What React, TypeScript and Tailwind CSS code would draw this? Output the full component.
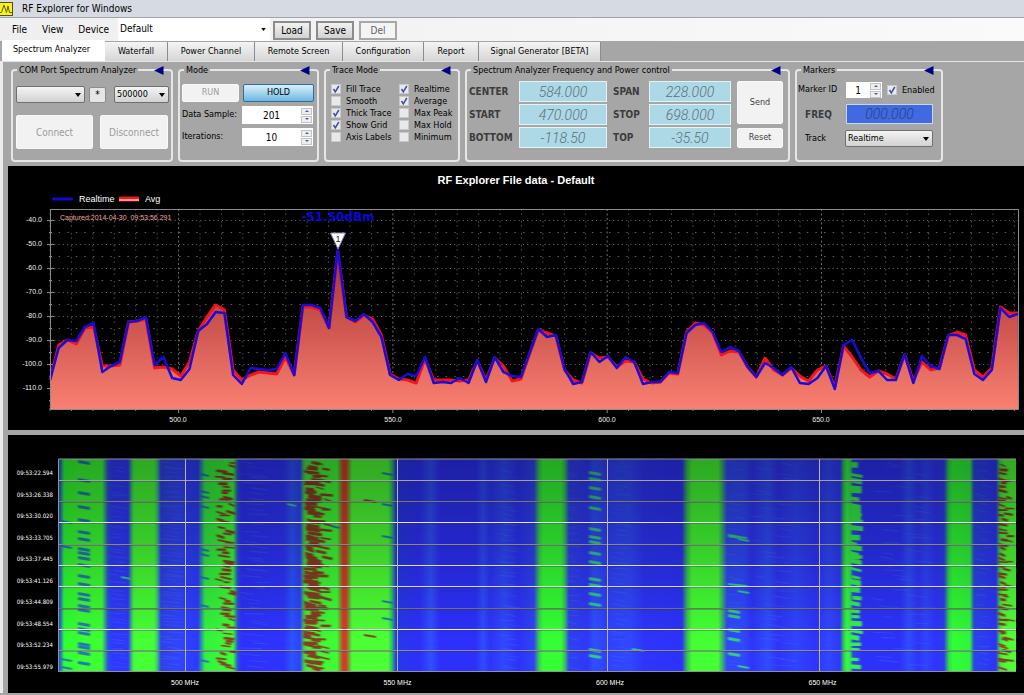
import type { ReactNode } from 'react';
import { clsx } from 'clsx';

const menus = ['File', 'View', 'Device'];

const tabs = [
  { label: 'Waterfall', width: 'w-[63px]' },
  { label: 'Power Channel', width: 'w-[87px]' },
  { label: 'Remote Screen', width: 'w-[88px]' },
  { label: 'Configuration', width: 'w-[81px]' },
  { label: 'Report', width: 'w-[55px]' },
  { label: 'Signal Generator [BETA]', width: 'w-[122px]' },
];

const traceOptions = [
  { label: 'Fill Trace', on: true },
  { label: 'Smooth', on: false },
  { label: 'Thick Trace', on: true },
  { label: 'Show Grid', on: true },
  { label: 'Axis Labels', on: false },
];

const traceModes = [
  { label: 'Realtime', on: true },
  { label: 'Average', on: true },
  { label: 'Max Peak', on: false },
  { label: 'Max Hold', on: false },
  { label: 'Minimum', on: false },
];

// Trace heights, one sample every TRACE_STEP units from the left axis
const TRACE_STEP = 8.72;

const realtime = [
  380, 348, 340, 341, 327, 323, 372, 366, 362, 322,
  321, 317, 365, 357, 378, 380, 369, 331, 324, 312,
  313, 375, 384, 368, 369, 370, 369, 353, 375, 305,
  305, 308, 328, 250, 317, 321, 314, 322, 337, 375,
  380, 374, 376, 357, 383, 382, 383, 378, 383, 360,
  382, 357, 372, 376, 377, 353, 329, 337, 335, 369,
  384, 382, 352, 362, 356, 368, 357, 362, 384, 382,
  382, 372, 373, 333, 325, 323, 332, 352, 347, 351,
  367, 377, 363, 368, 375, 367, 383, 384, 378, 366,
  389, 345, 340, 358, 373, 371, 380, 380, 354, 383,
  356, 366, 369, 335, 335, 339, 374, 380, 370, 308,
  317, 314,
];

const average = [
  380, 345, 340, 344, 328, 327, 366, 366, 365, 322,
  321, 319, 368, 367, 369, 376, 362, 331, 317, 305,
  310, 370, 380, 375, 372, 373, 374, 357, 375, 307,
  307, 310, 328, 252, 317, 322, 315, 319, 335, 374,
  379, 380, 383, 359, 380, 380, 380, 381, 380, 361,
  380, 358, 366, 381, 379, 354, 330, 333, 336, 370,
  380, 383, 353, 358, 357, 367, 361, 362, 379, 383,
  382, 373, 374, 332, 323, 325, 333, 355, 351, 352,
  367, 377, 358, 370, 375, 368, 376, 381, 370, 366,
  387, 346, 357, 370, 377, 371, 374, 379, 355, 381,
  362, 370, 368, 336, 332, 335, 370, 377, 368, 307,
  313, 313,
];

const toPoints = (data: number[]) =>
  data.map((y, i) => `${(50 + i * TRACE_STEP).toFixed(1)},${y}`).join(' ');

const dbLabels = ['-40.0', '-50.0', '-60.0', '-70.0', '-80.0', '-90.0', '-100.0', '-110.0'];

const mhzLabels = [
  { x: 178, label: '500.0' },
  { x: 393, label: '550.0' },
  { x: 607, label: '600.0' },
  { x: 821, label: '650.0' },
];

const times = [
  '09:53:22.594',
  '09:53:26.338',
  '09:53:30.020',
  '09:53:33.705',
  '09:53:37.445',
  '09:53:41.126',
  '09:53:44.809',
  '09:53:48.554',
  '09:53:52.234',
  '09:53:55.979',
];

// Signal level colours across the waterfall
const bands: [number, string][] = [
  [58, '#2c34f0'], [61, '#2a7fb0'], [64, '#2cff34'], [78, '#3aff30'], [102, '#3cff34'],
  [108, '#2a50e0'], [112, '#3038ff'], [128, '#3038ff'], [133, '#40f040'], [135, '#46ff34'],
  [154, '#46ff34'], [157, '#3ad070'], [161, '#3040e8'], [178, '#3044ff'], [198, '#2c3cff'],
  [205, '#34f040'], [233, '#3cff34'], [238, '#2c48e0'], [242, '#2c30fa'], [284, '#2e34ff'],
  [292, '#2c54ff'], [300, '#2e40ff'], [304, '#40d050'], [307, '#44f034'], [337, '#3cff34'],
  [340, '#78a034'], [343, '#d43c28'], [346, '#d43c28'], [349, '#78a034'], [352, '#4cff34'],
  [388, '#4cff34'], [392, '#2cc060'], [396, '#2838e8'], [420, '#2c30fa'], [431, '#3050ff'],
  [440, '#2c30fa'], [476, '#2c30fa'], [483, '#304cff'], [490, '#2c34fa'], [504, '#3048ff'],
  [518, '#2c32fa'], [534, '#3044f4'], [539, '#38d050'], [543, '#34ff34'], [561, '#34ff34'],
  [565, '#38c060'], [569, '#3040f0'], [588, '#2e38fa'], [594, '#3050ff'], [606, '#3040ff'],
  [630, '#3048ff'], [644, '#2e34fa'], [682, '#2c32fa'], [687, '#38c050'], [692, '#44ff34'],
  [718, '#44ff34'], [722, '#3cb868'], [727, '#3048f8'], [744, '#3048ff'], [752, '#2e34fa'],
  [768, '#304cff'], [778, '#2e34fa'], [796, '#3044ff'], [816, '#2e34fa'], [829, '#3048ff'],
  [840, '#2e38fa'], [844, '#30d050'], [847, '#34ff3c'], [850, '#34e850'], [853, '#2e44f0'],
  [862, '#2c32fa'], [900, '#2c32fa'], [909, '#304cff'], [918, '#2e34fa'], [926, '#3044ff'],
  [936, '#2e34fa'], [944, '#2c3cf0'], [949, '#30e044'], [953, '#30ff34'], [970, '#30f43c'],
  [974, '#2c44e8'], [996, '#2c34fa'], [1000, '#40e044'], [1004, '#4cff34'], [1016, '#4cff34'],
];

const WF_LEFT = 58;
const WF_RIGHT = 1016;
const WF_TOP = 459;
const WF_BOTTOM = 672;

const gridX = [185, 397, 607, 819];
const gridY = [
  { y: 480, tone: '#a0a0b0' },
  { y: 501, tone: '#77777f' },
  { y: 522, tone: '#e4e4ee' },
  { y: 544, tone: '#88888c' },
  { y: 565, tone: '#dcdce4' },
  { y: 586, tone: '#d8d8e0' },
  { y: 608, tone: '#707070' },
  { y: 629, tone: '#f0f0f6' },
  { y: 650, tone: '#8c8c90' },
];

type Speck = { x: number; y: number; w: number; h: number; skew: number };

function makeRandom(seed: number) {
  let s = seed;
  return () => {
    s = (s * 16807) % 2147483647;
    return s / 2147483647;
  };
}

function scatter(seed: number, left: number, right: number, count: number, width: number, height: number): Speck[] {
  const rand = makeRandom(seed);
  return Array.from({ length: count }, (_, i) => {
    const w = width * (0.6 + rand() * 0.6);
    return {
      x: left + rand() * Math.max(0, right - left - w),
      y: WF_TOP + 1 + ((i + rand() * 0.8) * (WF_BOTTOM - WF_TOP - 5)) / count,
      w,
      h: height * (0.7 + rand() * 0.7),
      skew: rand() * 3,
    };
  });
}

const at = (x: number, w: number, h: number, ys: number[]): Speck[] =>
  ys.map((y) => ({ x, y, w, h, skew: 2 }));

const streaks = [
  ...scatter(11, 108, 128, 44, 16, 1),
  ...scatter(23, 160, 184, 60, 18, 1),
  ...scatter(31, 240, 270, 40, 20, 1),
  ...scatter(47, 498, 520, 40, 14, 1),
  ...scatter(53, 566, 580, 30, 10, 1),
  ...scatter(59, 610, 630, 40, 14, 1),
  ...scatter(61, 722, 745, 30, 14, 1),
  ...scatter(67, 750, 800, 40, 18, 1),
  ...scatter(71, 868, 935, 44, 18, 1),
  ...scatter(73, 975, 992, 30, 10, 1),
];

const blueSpecks = [
  ...at(78, 12, 3, [460, 478, 491, 505, 518, 530, 537, 547, 551, 556, 563, 574, 582, 592, 597, 604, 608, 622, 627, 631, 642, 645, 651, 661]),
  ...at(61, 11, 2, [520, 545, 658, 666]),
  ...at(200, 9, 2, [473, 490, 495, 505, 548, 553, 576, 604, 659]),
  ...at(382, 11, 2, [472, 503, 535, 600, 617]),
  ...at(331, 9, 2, [525]),
];

const redSpecks = [
  ...scatter(83, 215, 237, 62, 10, 2),
  ...scatter(97, 303, 322, 74, 13, 3),
  ...scatter(101, 312, 333, 40, 11, 2),
  ...scatter(103, 997, 1008, 44, 9, 2),
  ...scatter(107, 1002, 1015, 16, 9, 2),
  ...at(364, 12, 2, [499, 634]),
];

const greenSpecks = [
  ...at(589, 12, 3, [471, 477, 486, 495, 506, 527, 535, 540, 551, 560, 577, 583, 592, 602, 648, 654]),
  ...at(728, 19, 2, [535, 583]),
  ...at(728, 12, 3, [534, 609, 614, 628, 637, 652]),
  ...at(738, 11, 2, [538, 590, 665]),
  ...at(632, 12, 2, [648]),
  ...at(121, 10, 2, [576]),
  ...at(287, 9, 2, [503]),
];

const edgeTeeth = [
  ...scatter(109, 848, 862, 30, 13, 4),
  ...at(850, 11, 9, [503, 512]),
  ...at(849, 10, 7, [551]),
];

function Specks({ items, fill, opacity }: { items: Speck[]; fill: string; opacity: number }) {
  return (
    <g fill={fill} opacity={opacity}>
      {items.map(({ x, y, w, h, skew }, i) => (
        <path key={i} d={`M${x} ${y}L${x + w} ${y + skew}V${y + skew + h}L${x} ${y + h}Z`} />
      ))}
    </g>
  );
}

function Group({ title, className, children }: { title: string; className: string; children: ReactNode }) {
  return (
    <fieldset className={clsx('relative h-[98px] shrink-0 rounded-[4px] border-2 border-[#e6e6e6]', className)}>
      <legend className="ml-1 px-[2px] text-[9px] leading-[12px] text-black">{title}</legend>
      <button type="button" aria-label={`Collapse ${title}`} className="absolute -top-[10px] right-[7px] h-[9px] w-[10px]">
        <svg viewBox="0 0 10 9" className="block h-[9px] w-[10px]">
          <path d="M0 4.500L9.500 0V9Z" fill="#00008b" />
        </svg>
      </button>
      {children}
    </fieldset>
  );
}

function Check({ label, on }: { label: string; on: boolean }) {
  return (
    <label className="flex items-center gap-[5px] text-[9px] leading-[12px] text-black">
      <span className="relative h-[10px] w-[10px] shrink-0">
        <input
          type="checkbox"
          defaultChecked={on}
          className="peer block h-[10px] w-[10px] appearance-none border border-[#c9c9c9] bg-[#e9e9ec]"
        />
        <svg viewBox="0 0 10 10" className="pointer-events-none absolute inset-0 hidden h-[10px] w-[10px] peer-checked:block">
          <path d="M2.500 5L4.300 7.800L7.800 2" fill="none" stroke="#3a4f9c" strokeWidth="1.500" />
        </svg>
      </span>
      {label}
    </label>
  );
}

function Picker({ id, label, value, className }: { id: string; label?: string; value: string; className: string }) {
  return (
    <span className={clsx('relative block', className)}>
      <select
        id={id}
        aria-label={label}
        defaultValue={value}
        className="block h-[17px] w-full appearance-none rounded-[2px] border border-[#707070] bg-linear-to-b from-[#f4f4f4] to-[#d2d2d2] px-[2px] text-[9px] leading-[15px] text-black"
      >
        <option>{value}</option>
      </select>
      <svg viewBox="0 0 6 4" className="pointer-events-none absolute top-[7px] right-[4px] h-[4px] w-[6px]">
        <path d="M0 0H6L3 4Z" fill="#000" />
      </svg>
    </span>
  );
}

function Spinner({ id, value, className }: { id: string; value: string; className: string }) {
  return (
    <span className={clsx('flex items-center bg-white pr-px', className)}>
      <input id={id} defaultValue={value} className="w-full min-w-0 flex-1 bg-transparent text-center text-[10px] leading-[15px] text-black" />
      <span className="flex w-[11px] shrink-0 flex-col gap-px">
        {['M1 3L3 1L5 3Z', 'M1 1L3 3L5 1Z'].map((d, i) => (
          <button
            key={d}
            type="button"
            aria-label={i === 0 ? 'Increase' : 'Decrease'}
            className="flex h-[7px] items-center justify-center border border-[#c4c4c8] bg-[#eeeef2]"
          >
            <svg viewBox="0 0 6 4" className="h-[4px] w-[6px]">
              <path d={d} fill="#4a5f9e" />
            </svg>
          </button>
        ))}
      </span>
    </span>
  );
}

function Lcd({ label, value }: { label: string; value: string }) {
  return (
    <>
      <label htmlFor={label} className="text-[10px] leading-[14px] font-bold text-[#3c3c3c]">
        {label}
      </label>
      <input
        id={label}
        defaultValue={value}
        className="h-[21px] w-full min-w-0 border border-[#e4f2f5] bg-[#add8e6] text-center font-['Roboto',sans-serif] text-[14px] leading-[19px] font-light text-[#58707a] italic"
      />
    </>
  );
}

function PlainButton({ children, className }: { children: ReactNode; className: string }) {
  return (
    <button type="button" className={clsx('rounded-[2px] border border-[#f8f8f8] bg-[#f2f2f2]', className)}>
      {children}
    </button>
  );
}

function SpectrumChart() {
  return (
    <svg viewBox="8 166 1016 264" className="block w-full bg-black" fontFamily="'Liberation Sans', Arial, sans-serif">
      <defs>
        <linearGradient id="fill" gradientUnits="userSpaceOnUse" x1="0" y1="240" x2="0" y2="409">
          <stop offset="0" stopColor="#8c3434" />
          <stop offset="0.4" stopColor="#c44c48" />
          <stop offset="1" stopColor="#fa8072" />
        </linearGradient>
      </defs>

      <text x="516" y="184" fontSize="11" fontWeight="700" fill="#fff" textAnchor="middle">
        RF Explorer File data - Default
      </text>

      {/* Legend */}
      <path d="M52 199H73" stroke="#0c0ccc" strokeWidth="3" />
      <text x="79" y="202" fontSize="9" fill="#fff">
        Realtime
      </text>
      <path d="M119 199H139" stroke="#f01818" strokeWidth="5" />
      <path d="M119 200H139" stroke="#fa9a90" strokeWidth="2" />
      <text x="145" y="202" fontSize="9" fill="#fff">
        Avg
      </text>

      {/* Grid */}
      {Array.from({ length: 16 }, (_, i) => {
        const y = 220 + i * 12;
        const major = i % 2 === 0;
        return (
          <g key={y} stroke="#8a8a8a">
            <path d={`M50 ${y + 0.5}H1018`} strokeDasharray={major ? '1 3.300' : '1.500 7.100'} opacity={major ? 0.8 : 0.7} />
            <path d={major ? `M47 ${y + 0.5}H54` : `M49 ${y + 0.5}H52`} />
          </g>
        );
      })}
      {Array.from({ length: 46 }, (_, i) => {
        const x = 50 + i * 21.43;
        const major = i % 10 === 6;
        return x < 1018 ? (
          <g key={i} stroke="#8a8a8a">
            <path
              d={`M${x} 209V409`}
              strokeDasharray={major ? '2 2.500' : '1.500 2.800 1.500 6.200'}
              opacity={major ? 0.8 : 0.6}
            />
            <path d={`M${x} 408V${major ? 413 : 411}`} />
          </g>
        ) : null;
      })}

      {/* Traces */}
      <polygon points={`50,409 ${toPoints(average)} 1018,409`} fill="url(#fill)" />
      <polyline points={toPoints(average)} fill="none" stroke="#f4141c" strokeWidth="3" strokeLinejoin="round" />
      <polyline points={toPoints(realtime)} fill="none" stroke="#1a0cd8" strokeWidth="2.500" strokeLinejoin="round" />
      <path d="M50.500 409.500V209.500H1018.500V409.500Z" fill="none" stroke="#8c8c8c" />

      {/* Peak marker */}
      <path d="M330.500 233H345.500L338 249Z" fill="#fff" stroke="#8a84c0" />
      <text x="338" y="242" fontSize="9" fill="#222" textAnchor="middle">
        1
      </text>
      <text x="338" y="221" fontSize="12" fontWeight="700" fill="#0808d8" textAnchor="middle" fontFamily="'DejaVu Sans', sans-serif">
        -51.50dBm
      </text>
      <text x="60" y="220" fontSize="7" fill="#f2a8a0">
        Captured:2014-04-30 {'\u00a0'}09:53:56.291
      </text>

      {/* Axis labels */}
      <g fill="#f0f0f0" fontSize="7">
        {dbLabels.map((label, i) => (
          <text key={label} x="42" y={222 + i * 24} textAnchor="end">
            {label}
          </text>
        ))}
        {mhzLabels.map(({ x, label }) => (
          <text key={label} x={x} y="422" textAnchor="middle">
            {label}
          </text>
        ))}
      </g>
    </svg>
  );
}

function WaterfallChart() {
  const width = WF_RIGHT - WF_LEFT;
  const height = WF_BOTTOM - WF_TOP;

  return (
    <svg viewBox="8 435 1016 258" className="block w-full bg-black" fontFamily="'Liberation Sans', Arial, sans-serif">
      <defs>
        <linearGradient id="bands">
          {bands.map(([x, color]) => (
            <stop key={x} offset={(x - WF_LEFT) / width} stopColor={color} />
          ))}
        </linearGradient>
        <linearGradient id="age" x1="0" y1="0" x2="0" y2="1">
          <stop offset="0" stopOpacity="0.340" />
          <stop offset="0.400" stopOpacity="0.200" />
          <stop offset="0.850" stopOpacity="0" />
        </linearGradient>
        <filter id="soft" x="-5%" y="-5%" width="110%" height="110%">
          <feGaussianBlur stdDeviation="0.9 0.5" />
        </filter>
        <clipPath id="area">
          <rect x={WF_LEFT} y={WF_TOP} width={width} height={height} />
        </clipPath>
      </defs>

      <rect x={WF_LEFT} y={WF_TOP} width={width} height={height} fill="url(#bands)" />
      <g clipPath="url(#area)">
        <g filter="url(#soft)">
          <Specks items={streaks} fill="#3c70f0" opacity={0.35} />
          <Specks items={edgeTeeth} fill="#34f048" opacity={1} />
          <Specks items={blueSpecks} fill="#2060d0" opacity={0.85} />
          <Specks items={greenSpecks} fill="#38e070" opacity={0.85} />
          <Specks items={redSpecks} fill="#8c3424" opacity={0.95} />
        </g>
      </g>
      <rect x={WF_LEFT} y={WF_TOP} width={width} height={height} fill="url(#age)" />

      {/* Grid */}
      {gridY.map(({ y, tone }) => (
        <g key={y}>
          <path d={`M${WF_LEFT} ${y + 1}H${WF_RIGHT}`} stroke="#303038" opacity="0.6" />
          <path d={`M${WF_LEFT} ${y}.500H${WF_RIGHT}`} stroke={tone} />
        </g>
      ))}
      {gridX.map((x) => (
        <path key={x} d={`M${x}.500 ${WF_TOP}V${WF_BOTTOM}`} stroke="#b4b4b4" />
      ))}
      <path d="M58.500 459H1016M58.500 671.500H1016M58.500 459V672" stroke="#909098" fill="none" />

      {/* Axis labels */}
      <g fill="#fff" fontSize="6" fontFamily="'DejaVu Sans Condensed', sans-serif">
        {times.map((time, i) => (
          <text key={time} x="53" y={475 + i * 21.5} textAnchor="end">
            {time}
          </text>
        ))}
      </g>
      <g fill="#fff" fontSize="7">
        {['500 MHz', '550 MHz', '600 MHz', '650 MHz'].map((label, i) => (
          <text key={label} x={185 + i * 212.5} y="685" textAnchor="middle">
            {label}
          </text>
        ))}
      </g>
    </svg>
  );
}

export default function App() {
  return (
    <div className="min-h-screen overflow-hidden bg-[#a6a6a6] font-['DejaVu_Sans_Condensed','Noto_Sans',sans-serif] text-[10px] text-black">
      {/* Title bar */}
      <header className="flex h-[18px] items-center gap-[9px] border-b border-[#a0a4aa] bg-[#d6dbe3]">
        <svg viewBox="0 0 13 14" className="h-[14px] w-[13px]">
          <rect x="-1" y="0.500" width="13.500" height="13" fill="#f8f020" stroke="#55501a" />
          <path d="M0 10.500H1.500L4 3L6.500 10.500L8 4L9.500 10.500H12" fill="none" stroke="#6a6010" />
        </svg>
        <h1 className="text-[10px] leading-[14px]">RF Explorer for Windows</h1>
      </header>

      {/* Menu bar */}
      <nav className="flex h-[23px] bg-linear-to-r from-[#efefef] to-[#fafafa]">
        <div className="flex w-[118px] items-center gap-[15px] pl-3">
          {menus.map((menu) => (
            <button key={menu} type="button" className="text-[10px]">
              {menu}
            </button>
          ))}
        </div>
        <span className="relative block w-[152px]">
          <select aria-label="Preset" className="h-[23px] w-full appearance-none bg-white px-[2px] pb-[2px] text-[10px]">
            <option>Default</option>
          </select>
          <svg viewBox="0 0 6 4" className="pointer-events-none absolute top-[10px] right-[4px] h-[3px] w-[5px]">
            <path d="M0 0H6L3 4Z" fill="#000" />
          </svg>
        </span>
        <div className="flex items-end gap-[5px] pb-px pl-[3px]">
          <button type="button" className="h-[19px] w-[38px] border-2 border-[#8c8c8c] bg-linear-to-b from-[#f2f2f2] to-[#d2d2d2] leading-[14px]">
            Load
          </button>
          <button type="button" className="h-[19px] w-[38px] border-2 border-[#8c8c8c] bg-linear-to-b from-[#f2f2f2] to-[#d2d2d2] leading-[14px]">
            Save
          </button>
          <button type="button" className="h-[19px] w-[38px] border-2 border-[#a8a8a8] bg-[#f4f4f4] leading-[14px] text-[#606060]">
            Del
          </button>
        </div>
      </nav>

      {/* Tabs */}
      <div role="tablist" className="flex h-[21px] items-end border-b border-[#e6e6e6] pl-[2px] text-[9px]">
        <button type="button" role="tab" aria-selected="true" className="h-[21px] w-[103px] bg-white pr-1 pb-[2px]">
          Spectrum Analyzer
        </button>
        {tabs.map(({ label, width }) => (
          <button
            key={label}
            type="button"
            role="tab"
            aria-selected="false"
            className={clsx(
              'h-[19px] border-r border-[#8c8c8c] bg-linear-to-b from-[#f4f4f4] to-[#d6d6d6] whitespace-nowrap',
              width,
            )}
          >
            {label}
          </button>
        ))}
      </div>

      <main className="border-l-3 border-[#ececec]">
        <div className="flex gap-[5px] pt-[2px] pb-[4px] pl-[8px]">
          <Group title="COM Port Spectrum Analyzer" className="w-[162px]">
            <div className="flex items-center pt-[10px] pl-[3px]">
              <Picker id="port" label="COM port" value="" className="w-[69px]" />
              <button type="button" className="ml-1 h-[16px] w-[17px] rounded-[2px] border border-[#8c8c8c] bg-[#e6e6e6] leading-[14px]">
                *
              </button>
              <Picker id="baud" label="Baud rate" value="500000" className="ml-[8px] w-[55px]" />
            </div>
            <div className="flex gap-[7px] pt-[12px] pl-[3px] text-[10px] text-[#9c9c9c]">
              <PlainButton className="h-[34px] w-[77px]">Connect</PlainButton>
              <PlainButton className="h-[34px] w-[68px]">Disconnect</PlainButton>
            </div>
          </Group>

          <Group title="Mode" className="w-[141px]">
            <div className="flex gap-[4px] pt-[8px] pl-[2px] text-[9px]">
              <PlainButton className="h-[18px] w-[57px] text-[#9c9c9c]">RUN</PlainButton>
              <button
                type="button"
                className="h-[18px] w-[71px] rounded-[2px] border border-[#2f6f96] bg-linear-to-b from-[#d8effa] to-[#6cb8e2]"
              >
                HOLD
              </button>
            </div>
            <div className="flex flex-col gap-[4px] pt-[4px] pl-[2px] text-[9px]">
              <div className="flex items-center">
                <label htmlFor="samples" className="w-[60px] whitespace-nowrap">Data Sample:</label>
                <Spinner id="samples" value="201" className="h-[18px] w-[71px]" />
              </div>
              <div className="flex items-center">
                <label htmlFor="iterations" className="w-[60px]">Iterations:</label>
                <Spinner id="iterations" value="10" className="h-[18px] w-[71px]" />
              </div>
            </div>
          </Group>

          <Group title="Trace Mode" className="w-[136px]">
            <div className="flex pt-[7px] pl-[5px]">
              <div className="flex w-[68px] flex-col">
                {traceOptions.map((option) => (
                  <Check key={option.label} {...option} />
                ))}
              </div>
              <div className="flex flex-col">
                {traceModes.map((mode) => (
                  <Check key={mode.label} {...mode} />
                ))}
              </div>
            </div>
          </Group>

          <Group title="Spectrum Analyzer Frequency and Power control" className="w-[325px]">
            <div className="flex gap-[6px] pt-[5px] pl-[2px]">
              <div className="grid grid-cols-[50px_88px_42px_82px] items-center gap-y-[2px] [&>label:nth-of-type(even)]:pl-[6px]">
                <Lcd label="CENTER" value="584.000" />
                <Lcd label="SPAN" value="228.000" />
                <Lcd label="START" value="470.000" />
                <Lcd label="STOP" value="698.000" />
                <Lcd label="BOTTOM" value="-118.50" />
                <Lcd label="TOP" value="-35.50" />
              </div>
              <div className="flex flex-col gap-[4px] text-[9px] text-[#404040]">
                <PlainButton className="h-[43px] w-[46px]">Send</PlainButton>
                <PlainButton className="h-[20px] w-[46px]">Reset</PlainButton>
              </div>
            </div>
          </Group>

          <Group title="Markers" className="w-[148px]">
            <div className="flex items-center pt-[6px] pl-[1px]">
              <label htmlFor="marker" className="w-[48px] whitespace-nowrap text-[9px]">Marker ID</label>
              <Spinner id="marker" value="1" className="mr-[5px] h-[16px] w-[36px]" />
              <Check label="Enabled" on />
            </div>
            <div className="flex items-center pt-[6px] pl-[8px]">
              <label htmlFor="freq" className="w-[41px] text-[10px] font-bold text-[#3c3c3c]">FREQ</label>
              <input
                id="freq"
                defaultValue="000.000"
                className="h-[20px] w-[87px] border border-[#c8d4f4] bg-[#4169e1] text-center font-['Roboto',sans-serif] text-[14px] leading-[18px] font-light text-[#2c4080] italic"
              />
            </div>
            <div className="flex items-center pt-[6px] pl-[8px]">
              <label htmlFor="track" className="w-[40px] text-[9px]">Track</label>
              <Picker id="track" value="Realtime" className="w-[88px]" />
            </div>
          </Group>
        </div>

        <div className="flex flex-col gap-[5px] pl-[5px]">
          <SpectrumChart />
          <WaterfallChart />
        </div>
      </main>
    </div>
  );
}
